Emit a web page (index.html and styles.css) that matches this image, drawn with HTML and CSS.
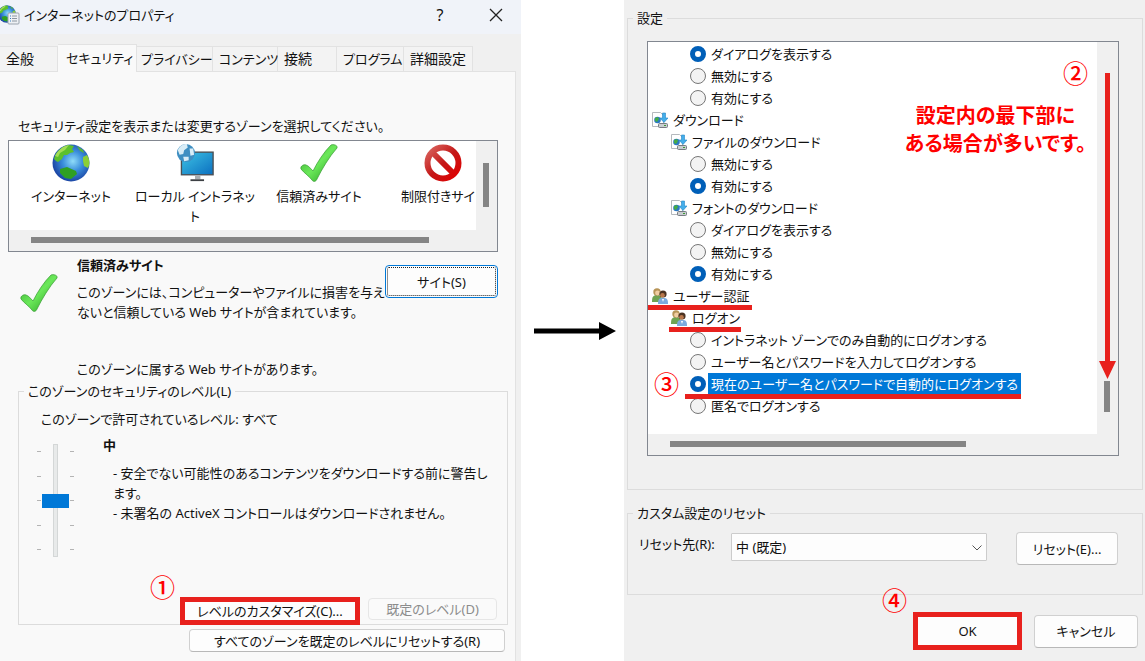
FILE: index.html
```html
<!DOCTYPE html>
<html lang="ja">
<head>
<meta charset="utf-8">
<title>インターネットのプロパティ</title>
<link rel="stylesheet" href="styles.css">
</head>
<body>
<svg class="defs" aria-hidden="true">
  <defs>
    <radialGradient id="sea" cx="55%" cy="45%" r="60%"><stop offset="0" stop-color="#8fdcf8"/><stop offset=".45" stop-color="#3b8fdc"/><stop offset="1" stop-color="#163a9c"/></radialGradient>
    <linearGradient id="leaf" x1="0" y1="0" x2="1" y2="1"><stop offset="0" stop-color="#35a82c"/><stop offset=".5" stop-color="#6be85a"/><stop offset="1" stop-color="#1d9418"/></linearGradient>
    <linearGradient id="screen" x1="0" y1="0" x2="1" y2="1"><stop offset="0" stop-color="#3fc4e4"/><stop offset="1" stop-color="#0b6fc0"/></linearGradient>
    <linearGradient id="ban" gradientUnits="userSpaceOnUse" x1="4" y1="4" x2="34" y2="34"><stop offset="0" stop-color="#d8625c"/><stop offset=".5" stop-color="#c41818"/><stop offset="1" stop-color="#e00000"/></linearGradient>
    <symbol id="globe" viewBox="0 0 38 38">
      <circle cx="19" cy="19" r="18.500" fill="url(#sea)"/>
      <path d="M2 15C4 7 10 2 17 1l5 1-2 3 2 3-4 1-3 2-3 0-2 4-4 3-2-1z" fill="#5cc02c"/>
      <path d="M3 12C6 6 11 2 17 1l-4 5-5 3-2 4z" fill="#a2dc55"/>
      <path d="M8 25l7-2 9 4 1 3-6 5-6-1-5-5z" fill="#2fa023"/>
      <path d="M31 13l4-2c3 5 3 9 1 13l-4-2-1-5z" fill="#8bcf35"/>
      <path d="M25 2l6 4 1 3-4-2z" fill="#56b53a"/>
    </symbol>
    <symbol id="check" viewBox="0 0 38 38">
      <path d="M1 25c-1-3 3-5 5-4 3 1 4 3 7 6C18 17 24 8 31 1c2-1 7 0 6 3C29 13 22 25 17 35c-1 3-4 3-5 1C8 31 4 29 1 25z" fill="url(#leaf)" stroke="#359b30" stroke-width=".7"/>
    </symbol>
    <symbol id="intranet" viewBox="0 0 42 42">
      <rect x="6" y="9" width="35" height="25" fill="url(#screen)" stroke="#4b4f54" stroke-width="1.500"/>
      <path d="M21 35h6v4h-6z" fill="#a8adb2"/><path d="M16 39h15v2H16z" fill="#3d4044"/>
      <circle cx="11" cy="10" r="10" fill="#3f8fc2"/>
      <path d="M2 7C4 2 8 0 12 0l1 4-4 3-1 4-4 1zM8 14l6 0 0 4-5 1zM15 5l4 0 1 7-4 1z" fill="#d9edf7"/>
    </symbol>
    <symbol id="block" viewBox="0 0 38 38">
      <circle cx="19" cy="19" r="15.500" fill="#fff" stroke="url(#ban)" stroke-width="6"/>
      <path d="M8 8l22 22" stroke="url(#ban)" stroke-width="6"/>
    </symbol>
    <symbol id="download" viewBox="0 0 16 16">
      <path d="M.5.500h8l3 3v11H.5z" fill="#fff" stroke="#b5b9bd"/>
      <circle cx="5.500" cy="8" r="3.300" fill="#2a78c4"/><path d="M3 6l3-1 1 2-2 3-2-1z" fill="#45ab45"/>
      <path d="M10.500 1h3v5h2.500l-4 4.500L8 6h2.500z" fill="#44aeea" stroke="#2387c8" stroke-width=".6"/>
      <rect x="6.500" y="11.500" width="9" height="4" rx="1" fill="#c9cdd1" stroke="#777c82"/><path d="M12 13.500h2" stroke="#3a9b32"/>
    </symbol>
    <symbol id="users" viewBox="0 0 16 16">
      <path d="M0 14c0-5 1-7 5-7s5 2 5 7z" fill="#6fa352"/><circle cx="5" cy="4" r="3.700" fill="#b79457"/><circle cx="5.500" cy="5" r="2.400" fill="#f0cda2"/>
      <path d="M6 16c0-5 1-6 5-6s5 1 5 6z" fill="#7baade"/><circle cx="11" cy="6" r="3.600" fill="#4c3322"/><circle cx="10.500" cy="7.200" r="2.300" fill="#b9784c"/>
      <path d="M10 11h2l-1 3z" fill="#fff"/>
    </symbol>
  </defs>
</svg>

<main class="guide">
  <section class="dialog props">
    <header class="titlebar">
      <svg class="app-icon" viewBox="0 0 20 20" aria-hidden="true">
        <use href="#globe" x="-2" y="0" width="18" height="18"/>
        <rect x="8" y="8" width="11" height="11" rx="1" fill="#eef1f5" stroke="#9aa3ad"/>
        <path d="M10 11h1M10 13.500h1M10 16h1" stroke="#2f7fc4"/><path d="M12 11h5M12 13.500h5M12 16h5" stroke="#8c96a0"/>
      </svg>
      <h1 class="title">インターネットのプロパティ</h1>
      <button class="caption" type="button" aria-label="ヘルプ">?</button>
      <button class="caption close" type="button" aria-label="閉じる"><svg width="14" height="14" viewBox="0 0 14 14"><path d="M1 1l12 12M13 1L1 13" stroke="#222" stroke-width="1.300"/></svg></button>
    </header>

    <nav class="tabs">
      <button class="tab general" type="button">全般</button>
      <button class="tab active" type="button">セキュリティ</button>
      <button class="tab privacy" type="button">プライバシー</button>
      <button class="tab content" type="button">コンテンツ</button>
      <button class="tab connect" type="button">接続</button>
      <button class="tab programs" type="button">プログラム</button>
      <button class="tab advanced" type="button">詳細設定</button>
    </nav>

    <div class="panel">
      <p class="intro">セキュリティ設定を表示または変更するゾーンを選択してください。</p>
      <div class="box zones">
        <ul class="zone-list">
          <li class="zone"><svg class="zone-icon"><use href="#globe"/></svg><span>インターネット</span></li>
          <li class="zone"><svg class="zone-icon"><use href="#intranet"/></svg><span>ローカル イントラネッ<br>ト</span></li>
          <li class="zone"><svg class="zone-icon"><use href="#check"/></svg><span>信頼済みサイト</span></li>
          <li class="zone"><svg class="zone-icon"><use href="#block"/></svg><span>制限付きサイト</span></li>
        </ul>
        <div class="vbar zones-v"><div class="thumb"></div></div>
        <div class="hbar zones-h"><div class="thumb"></div></div>
      </div>

      <div class="zone-info">
        <svg class="zone-icon"><use href="#check"/></svg>
        <div class="zone-text">
          <h2 class="strong">信頼済みサイト</h2>
          <p class="zone-desc">このゾーンには、コンピューターやファイルに損害を与え<br>ないと信頼している Web サイトが含まれています。</p>
          <p>このゾーンに属する Web サイトがあります。</p>
        </div>
        <button class="btn focused" type="button">サイト(S)</button>
      </div>

      <fieldset class="group level">
        <legend>このゾーンのセキュリティのレベル(L)</legend>
        <p class="allowed"><label for="level">このゾーンで許可されているレベル: すべて</label></p>
        <div class="level-body">
          <div class="slider">
            <div class="ticks"><i></i><i></i><i></i><i></i><i></i></div>
            <input id="level" class="range" type="range" min="0" max="4" value="2">
            <div class="ticks"><i></i><i></i><i></i><i></i><i></i></div>
          </div>
          <div class="level-text">
            <h2 class="strong">中</h2>
            <p class="level-desc">- 安全でない可能性のあるコンテンツをダウンロードする前に警告し<br>ます。<br>- 未署名の ActiveX コントロールはダウンロードされません。</p>
          </div>
        </div>
        <div class="level-buttons">
          <div class="marked">
            <button class="btn custom" type="button">レベルのカスタマイズ(C)...</button>
            <span class="step step-1">①</span>
          </div>
          <button class="btn default" type="button" disabled>既定のレベル(D)</button>
        </div>
      </fieldset>
      <button class="btn reset-all" type="button">すべてのゾーンを既定のレベルにリセットする(R)</button>
    </div>
  </section>

  <div class="between">
    <svg class="next" viewBox="0 0 82 18" aria-hidden="true"><path d="M0 6.500h65V0l17 9-17 9v-6.500H0z"/></svg>
  </div>

  <section class="dialog settings">
    <fieldset class="group options">
      <legend>設定</legend>
      <div class="box tree-box">
        <ul class="tree">
          <li class="row d2"><input type="radio" id="a1" name="a" checked><label for="a1">ダイアログを表示する</label></li>
          <li class="row d2"><input type="radio" id="a2" name="a"><label for="a2">無効にする</label></li>
          <li class="row d2"><input type="radio" id="a3" name="a"><label for="a3">有効にする</label></li>
          <li class="row"><svg class="node"><use href="#download"/></svg><span>ダウンロード</span></li>
          <li class="row d1"><svg class="node"><use href="#download"/></svg><span>ファイルのダウンロード</span></li>
          <li class="row d2"><input type="radio" id="b1" name="b"><label for="b1">無効にする</label></li>
          <li class="row d2"><input type="radio" id="b2" name="b" checked><label for="b2">有効にする</label></li>
          <li class="row d1"><svg class="node"><use href="#download"/></svg><span>フォントのダウンロード</span></li>
          <li class="row d2"><input type="radio" id="c1" name="c"><label for="c1">ダイアログを表示する</label></li>
          <li class="row d2"><input type="radio" id="c2" name="c"><label for="c2">無効にする</label></li>
          <li class="row d2"><input type="radio" id="c3" name="c" checked><label for="c3">有効にする</label></li>
          <li class="row line line-auth"><svg class="node"><use href="#users"/></svg><span>ユーザー認証</span></li>
          <li class="row d1 line line-logon"><svg class="node"><use href="#users"/></svg><span>ログオン</span></li>
          <li class="row d2"><input type="radio" id="d1" name="d"><label for="d1">イントラネット ゾーンでのみ自動的にログオンする</label></li>
          <li class="row d2"><input type="radio" id="d2" name="d"><label for="d2">ユーザー名とパスワードを入力してログオンする</label></li>
          <li class="row d2 line line-current"><input type="radio" id="d3" name="d" checked><label class="selected" for="d3">現在のユーザー名とパスワードで自動的にログオンする</label><span class="step step-3">③</span></li>
          <li class="row d2"><input type="radio" id="d4" name="d"><label for="d4">匿名でログオンする</label></li>
        </ul>
        <div class="vbar tree-v"><div class="thumb"></div></div>
        <div class="hbar tree-h"><div class="thumb"></div></div>
        <span class="step step-2">②</span>
        <p class="note">設定内の最下部に<br>ある場合が多いです。</p>
        <svg class="down" viewBox="0 0 17 306" aria-hidden="true"><path d="M6 0h5v288h6l-8.500 18L0 288h6z"/></svg>
      </div>
    </fieldset>

    <fieldset class="group reset">
      <legend>カスタム設定のリセット</legend>
      <div class="reset-row">
        <label for="preset">リセット先(R):</label>
        <div class="combo">
          <select id="preset"><option>中 (既定)</option></select>
          <svg class="chevron" viewBox="0 0 10 6"><path d="M.5.500L5 5 9.500.500" fill="none" stroke="#555"/></svg>
        </div>
        <button class="btn reset-btn" type="button">リセット(E)...</button>
      </div>
    </fieldset>

    <footer class="actions">
      <div class="marked">
        <button class="btn ok" type="button">OK</button>
        <span class="step step-4">④</span>
      </div>
      <button class="btn cancel" type="button">キャンセル</button>
    </footer>
  </section>
</main>
</body>
</html>
```
FILE: styles.css
```css
* { box-sizing: border-box; }

body {
  margin: 0;
  background: #fff;
  color: #111;
  font: 13px/20px "Noto Sans", "Noto Sans CJK JP", sans-serif;
  font-feature-settings: "palt";
}

h1, h2, p, ul, fieldset { margin: 0; padding: 0; }
ul { list-style: none; }
button, input, select { font: inherit; font-feature-settings: inherit; color: inherit; margin: 0; }
.defs { position: absolute; width: 0; height: 0; }

.guide {
  display: grid;
  grid-template-columns: 521fr 103fr 521fr;
  min-height: 100vh;
}
.dialog { background: #f0f0f0; min-width: 0; }
.props { display: flex; flex-direction: column; }

/* title bar */
.titlebar {
  display: flex;
  align-items: center;
  height: 34px;
  padding-bottom: 4px;
  background: #f0f3f9;
}
.app-icon { width: 20px; height: 20px; margin-right: 4px; }
.title { flex: 1; font-size: 13px; font-weight: 400; }
.caption {
  width: 60px;
  padding: 0;
  border: 0;
  background: none;
  font-size: 16px;
  line-height: 20px;
}
.close { width: 51px; }
.caption svg { display: block; margin: 0 auto; }

/* tabs */
.tabs { display: flex; align-items: flex-end; height: 37px; }
.tab {
  height: 25px;
  padding: 0 0 0 6px;
  border: 1px solid #e2e2e2;
  border-width: 1px 1px 0 0;
  background: #f3f3f3;
  text-align: left;
  white-space: nowrap;
  line-height: 24px;
}
.general, .connect, .advanced { font-size: 14px; }
.general { width: 58px; }
.active {
  position: relative;
  width: 79px;
  height: 28px;
  margin-bottom: -1px;
  padding: 0 0 2px 8px;
  background: #f9f9f9;
}
.privacy { width: 76px; padding-left: 4px; }
.content { width: 65px; }
.connect { width: 59px; }
.programs { width: 67px; }
.advanced { width: 69px; }

.panel {
  flex: 1;
  display: flex;
  flex-direction: column;
  margin-right: 5px;
  padding: 44px 7px 8px 8px;
  border: 1px solid #e2e2e2;
  border-width: 1px 1px 0 0;
  background: #f9f9f9;
}
.intro { padding-left: 10px; }

.box {
  position: relative;
  display: grid;
  border: 1px solid #828790;
  background: #fff;
}
.vbar, .hbar { background: #f0f0f0; }
.thumb { background: #858585; }
.zones {
  grid-template: 89px 21px / minmax(0, 1fr) 21px;
  margin: 4px 10px 0 0;
}
.zone-list { display: flex; overflow: hidden; }
.zone {
  flex: 0 0 124px;
  min-width: 0;
  padding-top: 3px;
  text-align: center;
  white-space: nowrap;
}
.zone svg { display: block; margin: 0 auto 4px; }
.zone-icon { width: 38px; height: 38px; flex: none; }
.zones-v { padding: 22px 8px 0 7px; }
.zones-v .thumb { height: 44px; }
.zones-h { grid-column: 1 / 3; padding: 7px 68px 0 22px; }
.hbar .thumb { height: 6px; }

.zone-info { display: flex; padding: 3px 10px 0 12px; }
.zone-info > svg { margin: 19px 19px 0 0; }
.zone-text { flex: 1; white-space: nowrap; min-width: 0; }
.strong { font-size: 13px; font-weight: 700; }
.zone-desc { margin: 7px 0 37px; }

.btn {
  height: 33px;
  padding: 0;
  border: 1px solid #d0d0d0;
  border-bottom-color: #b8b8b8;
  border-radius: 4px;
  background: #fdfdfd;
  text-align: center;
  line-height: 20px;
  white-space: nowrap;
}
.focused {
  width: 113px;
  margin-top: 10px;
  border: 1px solid #0078d7;
  outline: 1px dotted #222;
  outline-offset: -3px;
}

.group { min-width: 0; border: 1px solid #dcdcdc; }
.group legend { margin-left: 5px; padding: 0 4px; }
.level { margin: 2px 0 0 10px; }
.allowed { padding: 8px 0 0 22px; }
.level-body { display: flex; padding-top: 6px; }
.slider { display: flex; gap: 12px; height: 113px; margin: 9px 0 0 18px; }
.ticks { display: flex; flex-direction: column; justify-content: space-between; padding: 7px 0; }
.ticks i { width: 4px; height: 1px; background: #b4b4b4; }
.range {
  appearance: none;
  writing-mode: vertical-lr;
  width: 27px;
  height: 113px;
  margin: 0 -11px;
  background: none;
}
.range::-webkit-slider-runnable-track {
  width: 5px;
  height: 113px;
  margin: 0 auto;
  border: 1px solid #d4d7d7;
  background: #e8eaea;
}
.range::-webkit-slider-thumb {
  appearance: none;
  width: 27px;
  height: 14px;
  margin-left: -12px;
  background: #0078d7;
}
.level-text { margin-left: 29px; white-space: nowrap; }
.level-desc { padding: 8px 0 0 10px; }
.level-buttons {
  display: flex;
  justify-content: flex-end;
  align-items: flex-end;
  gap: 13px;
  padding: 41px 10px 4px 0;
}
.marked { position: relative; display: flex; }
.custom {
  width: 170px;
  height: 18px;
  border: 0;
  border-radius: 0;
  outline: 5px solid #e8211d;
  line-height: 18px;
}
.default { width: 129px; height: 22px; border-color: #e6e6e6; background: #fafafa; color: #8c8c8c; }
.reset-all { width: 316px; height: 23px; margin: 4px 3px 0 0; align-self: flex-end; }

/* numbered steps */
.step {
  position: absolute;
  color: #f00;
  font: 500 25px/28px "Noto Sans CJK JP", sans-serif;
}
.step-1 { left: -35px; top: -30px; }
.step-2 { right: 30px; top: 16px; }
.step-3 { left: 6px; top: -4px; }
.step-4 { left: -31px; top: -27px; }

.between { display: flex; align-items: center; justify-content: center; }
.next { width: 82px; height: 18px; margin-left: 5px; }

/* security settings */
.settings { padding: 8px 2px 0 3px; }
.tree-box {
  grid-template: 392px 21px / minmax(0, 1fr) 21px;
  margin: 13px 23px 33px 19px;
}
.tree { padding-top: 1px; }
.row {
  position: relative;
  display: flex;
  align-items: center;
  height: 22px;
  padding-left: 4px;
  white-space: nowrap;
}
.d1 { padding-left: 23px; }
.d2 { padding-left: 42px; }
.node { width: 16px; height: 16px; margin-right: 5px; }
.row input {
  appearance: none;
  width: 16px;
  height: 16px;
  margin-right: 2px;
  border: 1px solid #767676;
  border-radius: 50%;
  background: #f3f3f3;
}
.row input:checked { border: 5px solid #005fb8; background: #fff; }
.row label { padding: 1px 3px; }
.row .selected { background: #0078d7; color: #fff; }
.line::after {
  content: "";
  position: absolute;
  bottom: -3px;
  z-index: 1;
  height: 5px;
  background: #e8211d;
}
.line-auth::after { left: 0; width: 104px; }
.line-logon::after { left: 21px; width: 72px; }
.line-current::after { left: 37px; width: 336px; bottom: -4px; }
.tree-v { padding: 339px 8px 0 7px; }
.tree-v .thumb { height: 31px; }
.tree-h { grid-column: 1 / 3; padding: 7px 152px 0 22px; }
.note {
  position: absolute;
  top: 59px;
  right: 32px;
  color: #f00;
  font: 700 20px/28px "Noto Sans CJK JP", sans-serif;
  font-feature-settings: "palt";
  text-align: center;
}
.down { position: absolute; right: 2px; top: 31px; width: 17px; height: 306px; fill: #e8211d; }

.reset { margin-top: 13px; }
.reset-row { display: flex; align-items: flex-start; padding: 9px 24px 29px 11px; }
.reset-row label { flex: 0 0 92px; padding-top: 2px; white-space: nowrap; }
.combo { position: relative; flex: 1; margin: 1px 29px 0 0; }
.combo select {
  appearance: none;
  display: block;
  width: 100%;
  height: 28px;
  padding: 0 4px;
  border: 1px solid #ccc;
  border-radius: 1px;
  background: #fdfdfd;
}
.chevron { position: absolute; right: 5px; top: 12px; width: 10px; height: 6px; }
.reset-btn { width: 102px; }

.actions {
  display: flex;
  justify-content: flex-end;
  align-items: center;
  gap: 12px;
  padding: 17px 5px 0 0;
}
.ok { width: 109px; height: 38px; border: 5px solid #e8211d; border-radius: 0; }
.cancel { width: 104px; }
```
